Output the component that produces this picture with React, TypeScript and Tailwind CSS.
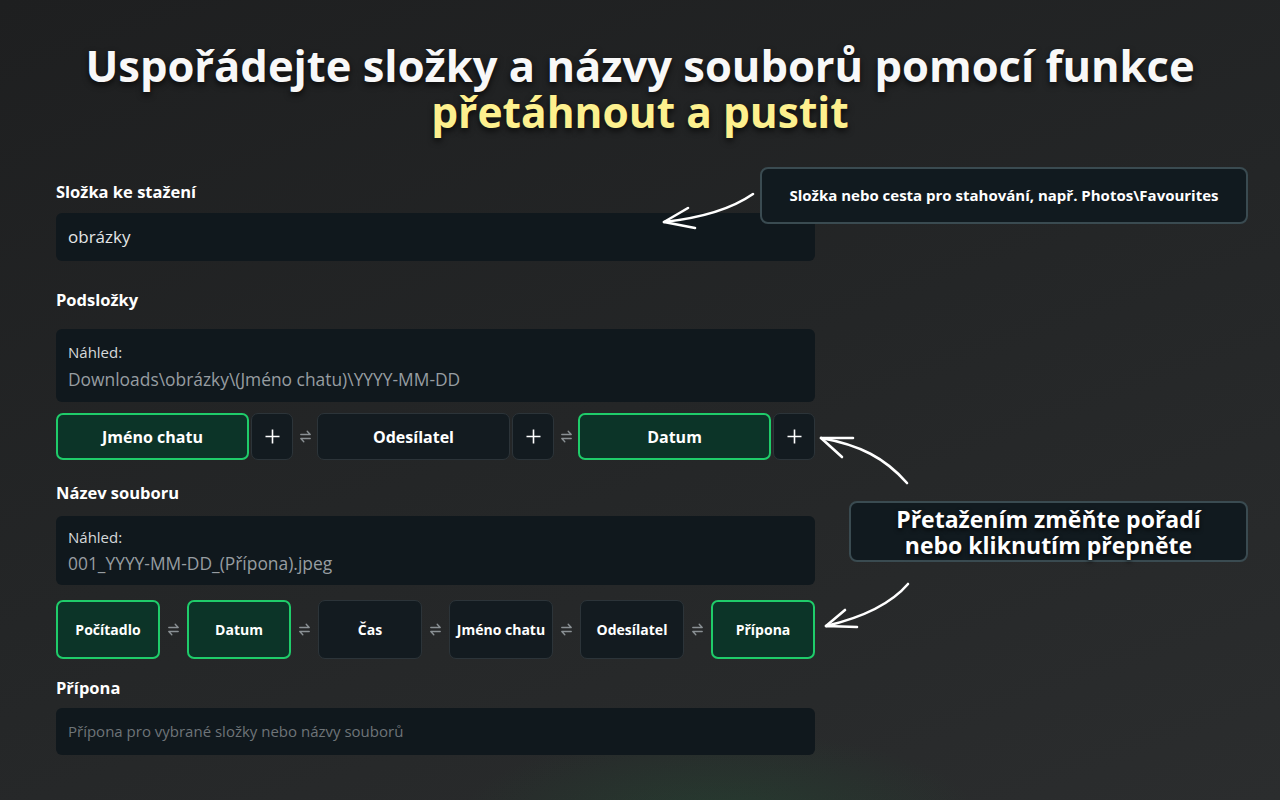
import React from 'react';

const font = { fontFamily: '"Open Sans", "Noto Sans", sans-serif' };

function Swap() {
  return (
    <div className="flex w-[24px] shrink-0 items-center justify-center text-[#8a9094]">
      <svg width="11" height="13" viewBox="0 0 11 13" fill="none" stroke="currentColor" strokeWidth="1.4" strokeLinecap="round" strokeLinejoin="round">
        <path d="M0.8 4.5H10.2L7.2 1.3" />
        <path d="M10.2 8.5H0.8L3.8 11.7" />
      </svg>
    </div>
  );
}

function Chip({ label, active, className }: { label: string; active?: boolean; className: string }) {
  return (
    <div
      className={`flex shrink-0 items-center justify-center rounded-[7px] font-bold text-white ${className} ${
        active ? 'border-2 border-[#1fcc6a] bg-[#0c3428]' : 'border border-[#2c3439] bg-[#131b20]'
      }`}
    >
      {label}
    </div>
  );
}

function Plus() {
  return (
    <div className="ml-[2px] flex h-[47px] w-[42px] shrink-0 items-center justify-center rounded-[7px] border border-[#2c3439] bg-[#131b20] text-white">
      <svg width="15" height="15" viewBox="0 0 15 15" stroke="currentColor" strokeWidth="1.6">
        <path d="M7.5 0.5V14.5M0.5 7.5H14.5" />
      </svg>
    </div>
  );
}

export default function App() {
  return (
    <div
      className="relative h-[800px] w-[1280px] overflow-hidden bg-[#232526]"
      style={{
        ...font,
        backgroundImage:
          'radial-gradient(ellipse 260px 90px at 720px 820px, rgba(34,90,55,0.35), transparent), linear-gradient(160deg, #1e1f20 0%, #242627 50%, #2b2d2e 100%)',
      }}
    >
      <div className="pt-[43px] text-center font-bold leading-[46px] [text-shadow:0_3px_6px_rgba(0,0,0,0.7)]">
        <div className="text-[43.5px] text-[#f8f8f8]">Uspořádejte složky a názvy souborů pomocí funkce</div>
        <div className="text-[42.5px] text-[#fdf08e]">přetáhnout a pustit</div>
      </div>

      <div className="ml-[56px] mt-[45px] w-[759px]">
        <div className="text-[16.5px] font-bold leading-[24px] text-white">Složka ke stažení</div>
        <div className="mt-[9px] flex h-[48px] items-center rounded-[6px] bg-[#10181d] px-[12px] text-[17px] text-[#e4e6e7]">
          obrázky
        </div>

        <div className="mt-[27px] text-[16.5px] font-bold leading-[24px] text-white">Podsložky</div>
        <div className="mt-[17px] flex h-[73px] flex-col justify-center rounded-[6px] bg-[#10181d] px-[12px]">
          <div className="text-[15px] leading-[22px] text-[#d6d9db]">Náhled:</div>
          <div className="mt-[4px] text-[17.4px] leading-[24px] text-[#979da1]">Downloads\obrázky\(Jméno chatu)\YYYY-MM-DD</div>
        </div>

        <div className="mt-[11px] flex items-center">
          <Chip label="Jméno chatu" active className="h-[47px] w-[193px] text-[16px]" />
          <Plus />
          <Swap />
          <Chip label="Odesílatel" className="h-[47px] w-[193px] text-[16px]" />
          <Plus />
          <Swap />
          <Chip label="Datum" active className="h-[47px] w-[193px] text-[16px]" />
          <Plus />
        </div>

        <div className="mt-[21px] text-[16.5px] font-bold leading-[24px] text-white">Název souboru</div>
        <div className="mt-[11px] flex h-[69px] flex-col justify-center rounded-[6px] bg-[#10181d] px-[12px]">
          <div className="text-[15px] leading-[22px] text-[#d6d9db]">Náhled:</div>
          <div className="mt-[3px] text-[17.4px] leading-[24px] text-[#979da1]">001_YYYY-MM-DD_(Přípona).jpeg</div>
        </div>

        <div className="mt-[15px] flex items-center">
          <Chip label="Počítadlo" active className="h-[59px] w-[104px] text-[14px]" />
          <div className="flex w-[27px] justify-center"><Swap /></div>
          <Chip label="Datum" active className="h-[59px] w-[104px] text-[14px]" />
          <div className="flex w-[27px] justify-center"><Swap /></div>
          <Chip label="Čas" className="h-[59px] w-[104px] text-[14px]" />
          <div className="flex w-[27px] justify-center"><Swap /></div>
          <Chip label="Jméno chatu" className="h-[59px] w-[104px] text-[14px]" />
          <div className="flex w-[27px] justify-center"><Swap /></div>
          <Chip label="Odesílatel" className="h-[59px] w-[104px] text-[14px]" />
          <div className="flex w-[27px] justify-center"><Swap /></div>
          <Chip label="Přípona" active className="h-[59px] w-[104px] text-[14px]" />
        </div>

        <div className="mt-[17px] text-[16.5px] font-bold leading-[24px] text-white">Přípona</div>
        <div className="mt-[8px] flex h-[47px] items-center rounded-[6px] bg-[#10181d] px-[12px] text-[15px] text-[#6e7478]">
          Přípona pro vybrané složky nebo názvy souborů
        </div>
      </div>

      <div className="absolute left-[760px] top-[167px] flex h-[57px] w-[488px] items-center justify-center rounded-[8px] border-2 border-[#3a4b51] bg-[#111a1f] text-[15px] font-bold text-white">
        Složka nebo cesta pro stahování, např. Photos\Favourites
      </div>

      <div className="absolute left-[849px] top-[501px] flex h-[61px] w-[399px] flex-col items-center justify-center rounded-[8px] border-2 border-[#3a4b51] bg-[#111a1f] text-center text-[23px] font-bold leading-[26px] text-white [text-shadow:0_2px_4px_rgba(0,0,0,0.7)]">
        <div>Přetažením změňte pořadí</div>
        <div>nebo kliknutím přepněte</div>
      </div>

      <svg className="pointer-events-none absolute left-0 top-0" width="1280" height="800" fill="none" stroke="#ffffff" strokeWidth="2.6" strokeLinecap="round" strokeLinejoin="round">
        <path d="M753 194 C730 210 700 218 664 222" />
        <path d="M664 222 L688 208 M664 222 L695 228" />
        <path d="M907 483 C885 458 860 445 821 438" />
        <path d="M821 438 L853 438 M821 438 L842 457" />
        <path d="M908 584 C890 605 860 618 826 626" />
        <path d="M826 626 L857 627 M826 626 L845 610" />
      </svg>
    </div>
  );
}
